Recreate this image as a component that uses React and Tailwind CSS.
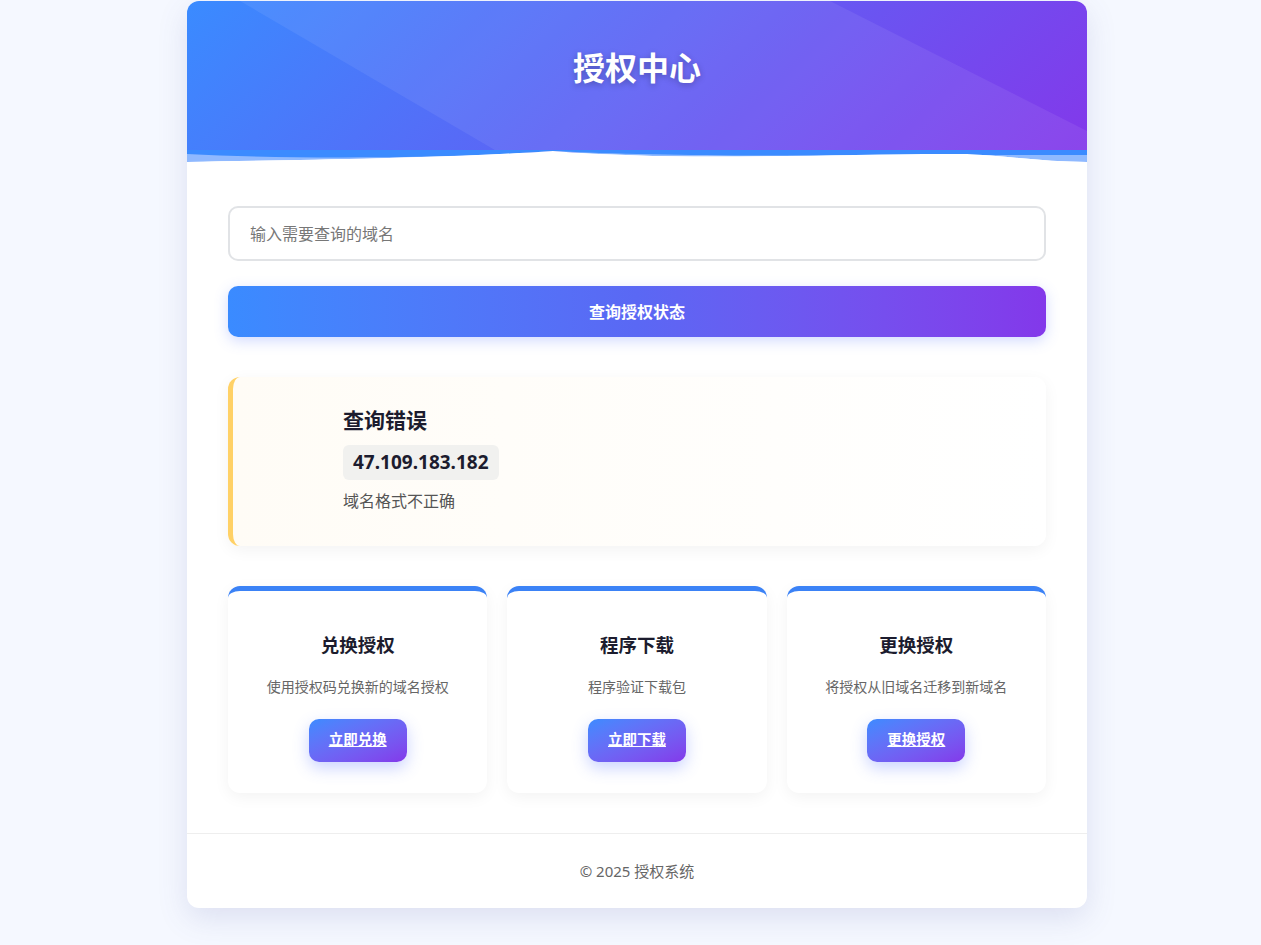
import React, { useState } from "react";

const font = { fontFamily: '"Noto Sans", "Noto Sans CJK SC", sans-serif' };

const actions = [
  { title: "兑换授权", desc: "使用授权码兑换新的域名授权", button: "立即兑换" },
  { title: "程序下载", desc: "程序验证下载包", button: "立即下载" },
  { title: "更换授权", desc: "将授权从旧域名迁移到新域名", button: "更换授权" },
];

function Header() {
  return (
    <div className="relative h-[163px] overflow-hidden rounded-t-xl">
      <div className="relative flex h-[152px] items-center justify-center bg-[linear-gradient(135deg,#3a8bff,#8338ea)]">
        <svg className="absolute inset-0 h-full w-full" viewBox="0 0 900 152" preserveAspectRatio="none">
          <polygon points="53,0 643,0 900,130 900,152 313,152" fill="#ffffff" fillOpacity="0.07" />
        </svg>
        <h1 className="relative -mt-[18px] text-[32px] font-bold text-white [text-shadow:0_2px_6px_rgba(0,0,0,0.25)]">授权中心</h1>
      </div>
      <svg className="absolute bottom-0 left-0 h-[14px] w-full" viewBox="0 0 900 14" preserveAspectRatio="none">
        <path d="M0,0 H900 V12 C860,12 820,6 780,4 C650,3 500,12 366,1 C250,9 100,10 0,12 Z" fill="#8fb9ff" />
        <path d="M0,0 H900 V5 C700,5 500,8 366,1 C250,9 100,9 0,4 Z" fill="#3b8bff" />
        <path d="M0,12 C100,10 250,9 366,1 C500,12 650,3 780,4 C820,6 860,12 900,12 V14 H0 Z" fill="#ffffff" />
      </svg>
    </div>
  );
}

export default function App() {
  const [domain, setDomain] = useState("");

  return (
    <div className="min-h-[945px] bg-[#f5f8ff] pl-[13px] pt-px" style={font}>
      <div className="mx-auto w-[900px] rounded-xl bg-white shadow-[0_10px_30px_rgba(80,90,160,0.15)]">
        <Header />
        <div className="px-[41px] pb-10 pt-[42px]">
          <input
            value={domain}
            onChange={(e) => setDomain(e.target.value)}
            placeholder="输入需要查询的域名"
            className="h-[55px] w-full rounded-[10px] border-2 border-[#e1e3e6] px-5 text-[16px] text-gray-800 outline-none placeholder:text-[#777]"
          />
          <button className="mt-[25px] h-[51px] w-full rounded-[10px] bg-gradient-to-r from-[#3a8bff] via-[#5a68f4] to-[#8338ea] text-[16px] font-bold text-white shadow-[0_4px_14px_rgba(80,110,255,0.25)]">
            查询授权状态
          </button>

          <div className="mt-10 flex h-[169px] rounded-xl border-l-[5px] border-[#ffd166] bg-gradient-to-r from-[#fffcf6] to-white pl-[110px] shadow-[0_4px_16px_rgba(0,0,0,0.05)]">
            <div className="pt-[28px]">
              <h3 className="text-[21px] font-bold text-[#1c1c2e]">查询错误</h3>
              <span className="mt-[8px] inline-block rounded-md bg-[#f1f1ef] px-[10px] py-[4px] text-[19px] font-bold leading-[27px] text-[#1c1c2e]">47.109.183.182</span>
              <p className="mt-[9px] text-[16px] text-[#555]">域名格式不正确</p>
            </div>
          </div>

          <div className="mt-10 grid grid-cols-3 gap-5">
            {actions.map((a) => (
              <div key={a.title} className="flex h-[207px] flex-col items-center rounded-xl border-t-[5px] border-[#3b82f6] bg-white shadow-[0_4px_16px_rgba(0,0,0,0.05)]">
                <h3 className="mt-[40px] text-[18.5px] font-bold text-[#1c1c2e]">{a.title}</h3>
                <p className="mt-[17px] text-[14px] text-[#666]">{a.desc}</p>
                <button className="mt-[22px] h-[43px] rounded-[10px] bg-gradient-to-br from-[#3a8bff] to-[#8338ea] px-5 text-[14.5px] font-bold text-white underline shadow-[0_6px_16px_rgba(80,110,255,0.3)]">
                  {a.button}
                </button>
              </div>
            ))}
          </div>
        </div>
        <div className="flex h-[75px] items-center justify-center border-t border-[#eeeeee] text-[15px] text-[#666]">
          © 2025 授权系统
        </div>
      </div>
    </div>
  );
}
